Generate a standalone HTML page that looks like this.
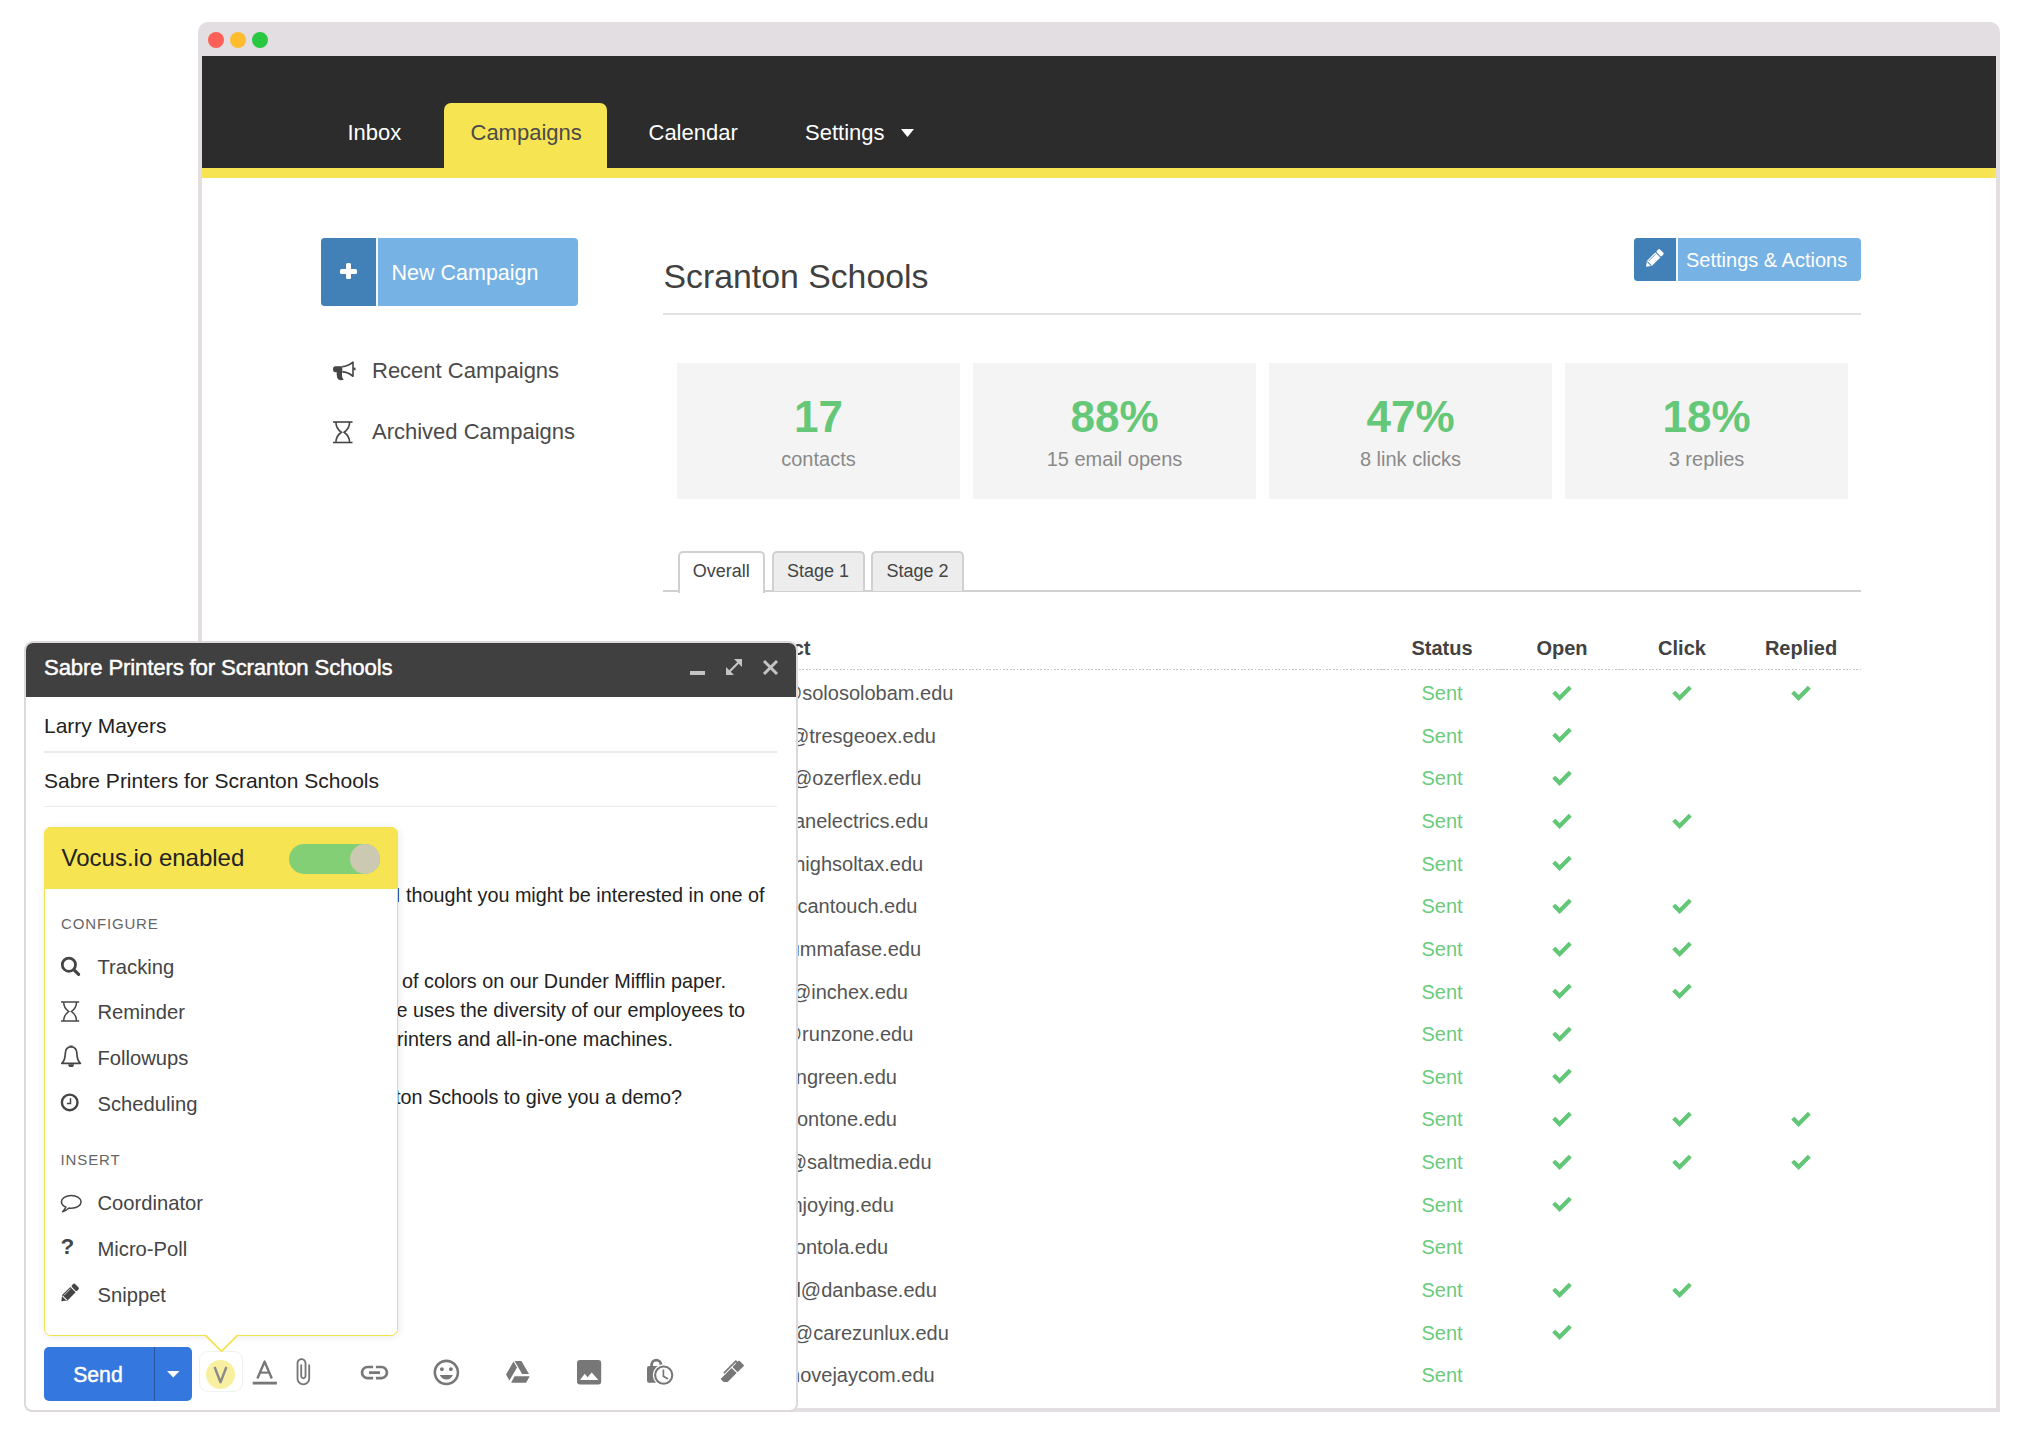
<!DOCTYPE html>
<html><head><meta charset="utf-8"><title>Vocus.io Campaigns</title>
<style>
html,body{margin:0;padding:0;}
body{width:2028px;height:1430px;position:relative;overflow:hidden;background:#fff;font-family:"Liberation Sans", sans-serif;}
.t{position:absolute;white-space:nowrap;}
svg{position:absolute;}
</style></head><body>

<div style="position:absolute;left:198px;top:22px;width:1802px;height:1390px;background:#e2dee2;border-radius:10px 10px 0 0;"></div>
<div style="position:absolute;left:202px;top:56px;width:1794px;height:1352px;background:#fff;"></div>
<div style="position:absolute;left:208px;top:32px;width:16px;height:16px;background:#fe5f57;border-radius:50%;"></div>
<div style="position:absolute;left:230px;top:32px;width:16px;height:16px;background:#febc2e;border-radius:50%;"></div>
<div style="position:absolute;left:252px;top:32px;width:16px;height:16px;background:#29c840;border-radius:50%;"></div>
<div style="position:absolute;left:202px;top:56px;width:1794px;height:112px;background:#2c2c2c;"></div>
<div style="position:absolute;left:202px;top:168px;width:1794px;height:10px;background:#f6e452;"></div>
<div style="position:absolute;left:444px;top:103px;width:163px;height:67px;background:#f6e452;border-radius:7px 7px 0 0;"></div>
<div class="t" style="left:347.50px;top:122.37px;font-size:22px;line-height:22px;color:#ffffff;font-weight:400;">Inbox</div>
<div class="t" style="left:470.50px;top:122.37px;font-size:22px;line-height:22px;color:#4a4a4a;font-weight:400;">Campaigns</div>
<div class="t" style="left:648.50px;top:122.37px;font-size:22px;line-height:22px;color:#ffffff;font-weight:400;">Calendar</div>
<div class="t" style="left:805.00px;top:122.37px;font-size:22px;line-height:22px;color:#ffffff;font-weight:400;">Settings</div>
<svg style="position:absolute;left:901px;top:129px;overflow:visible;" width="13" height="8" viewBox="0 0 13 8"><path d="M0,0 H13 L6.5,8 Z" fill="#fff"/></svg>
<div style="position:absolute;left:321px;top:238px;width:257px;height:68px;background:#77b2e4;border-radius:4px;"></div>
<div style="position:absolute;left:321px;top:238px;width:55px;height:68px;background:#4281b8;border-radius:4px 0 0 4px;"></div>
<div style="position:absolute;left:376px;top:238px;width:2px;height:68px;background:#f2f6fa;"></div>
<div style="position:absolute;left:340px;top:269px;width:17px;height:4.5px;background:#fff;border-radius:1.5px;"></div>
<div style="position:absolute;left:346px;top:263px;width:5px;height:16px;background:#fff;border-radius:1.5px;"></div>
<div class="t" style="left:391.50px;top:263.30px;font-size:21.5px;line-height:21.5px;color:#ffffff;font-weight:400;">New Campaign</div>
<svg style="position:absolute;left:333px;top:360.7px;overflow:visible;" width="24" height="20" viewBox="0 0 24 20"><g fill="#454545" stroke="#454545"><path d="M2.5,5.3 H9.3 V11.2 H2.5 A2.5,2.95 0 0 1 2.5,5.3 Z" stroke="none"/><path d="M3.7,11 H9 V14.5 Q9,17.2 10.8,18.4 Q8,19.8 5.6,18.6 Q3.7,17.2 3.7,13.5 Z" stroke="none"/><path d="M9.3,5.6 Q15,5.4 20,1.2 V15.3 Q15,11 9.3,10.9" fill="none" stroke-width="1.6" stroke-linejoin="round"/><rect x="20.5" y="6.6" width="2" height="2.6" stroke="none"/></g></svg>
<div class="t" style="left:372.00px;top:359.87px;font-size:22px;line-height:22px;color:#4a4a4a;font-weight:400;">Recent Campaigns</div>
<svg style="position:absolute;left:333px;top:420.5px;overflow:visible;" width="19.5" height="22.5" viewBox="0 0 19.5 22.5"><g fill="none" stroke="#454545" stroke-width="1.6"><line x1="0" y1="1" x2="19.5" y2="1"/><line x1="0" y1="21.5" x2="19.5" y2="21.5"/><path d="M2.925,1 C2.7300000000000004,7.2 5.85,9.45 8.385,11.25 C5.85,13.049999999999999 2.7300000000000004,15.3 2.925,21.5"/><path d="M16.575,1 C16.77,7.2 13.649999999999999,9.45 11.114999999999998,11.25 C13.649999999999999,13.049999999999999 16.77,15.3 16.575,21.5"/></g></svg>
<div class="t" style="left:372.00px;top:421.37px;font-size:22px;line-height:22px;color:#4a4a4a;font-weight:400;">Archived Campaigns</div>
<div class="t" style="left:663.50px;top:259.68px;font-size:33.8px;line-height:33.8px;color:#404040;font-weight:400;">Scranton Schools</div>
<div style="position:absolute;left:663px;top:313px;width:1198px;height:2px;background:#e2e2e2;"></div>
<div style="position:absolute;left:1634px;top:238px;width:227px;height:43px;background:#77b2e4;border-radius:4px;"></div>
<div style="position:absolute;left:1634px;top:238px;width:42px;height:43px;background:#4281b8;border-radius:4px 0 0 4px;"></div>
<div style="position:absolute;left:1676px;top:238px;width:2px;height:43px;background:#f2f6fa;"></div>
<svg style="position:absolute;left:0px;top:0px;overflow:visible;" width="1" height="1" viewBox="0 0 1 1"><g transform="translate(1646,266.8) rotate(-45)"><path d="M0,0 L5,-3.6 H16.7 V3.6 H5 Z" fill="#ffffff"/><rect x="17.7" y="-3.6" width="4.5" height="7.2" rx="1.6" fill="#ffffff"/><line x1="6" y1="-2.2" x2="15.7" y2="-2.2" stroke="#4281b8" stroke-width="0.7"/><line x1="4.6" y1="-2.8800000000000003" x2="4.6" y2="2.8800000000000003" stroke="#4281b8" stroke-width="1"/></g></svg>
<div class="t" style="left:1686.00px;top:249.97px;font-size:20px;line-height:20px;color:#ffffff;font-weight:400;">Settings &amp; Actions</div>
<div style="position:absolute;left:677px;top:363px;width:283px;height:136px;background:#f4f4f4;"></div>
<div class="t" style="left:677.00px;width:283px;text-align:center;top:395.25px;font-size:44px;line-height:44px;color:#65c878;font-weight:700;">17</div>
<div class="t" style="left:677.00px;width:283px;text-align:center;top:449.07px;font-size:20px;line-height:20px;color:#8a8a8a;font-weight:400;">contacts</div>
<div style="position:absolute;left:973px;top:363px;width:283px;height:136px;background:#f4f4f4;"></div>
<div class="t" style="left:973.00px;width:283px;text-align:center;top:395.25px;font-size:44px;line-height:44px;color:#65c878;font-weight:700;">88%</div>
<div class="t" style="left:973.00px;width:283px;text-align:center;top:449.07px;font-size:20px;line-height:20px;color:#8a8a8a;font-weight:400;">15 email opens</div>
<div style="position:absolute;left:1269px;top:363px;width:283px;height:136px;background:#f4f4f4;"></div>
<div class="t" style="left:1269.00px;width:283px;text-align:center;top:395.25px;font-size:44px;line-height:44px;color:#65c878;font-weight:700;">47%</div>
<div class="t" style="left:1269.00px;width:283px;text-align:center;top:449.07px;font-size:20px;line-height:20px;color:#8a8a8a;font-weight:400;">8 link clicks</div>
<div style="position:absolute;left:1565px;top:363px;width:283px;height:136px;background:#f4f4f4;"></div>
<div class="t" style="left:1565.00px;width:283px;text-align:center;top:395.25px;font-size:44px;line-height:44px;color:#65c878;font-weight:700;">18%</div>
<div class="t" style="left:1565.00px;width:283px;text-align:center;top:449.07px;font-size:20px;line-height:20px;color:#8a8a8a;font-weight:400;">3 replies</div>
<div style="position:absolute;left:663px;top:590px;width:1198px;height:2px;background:#d0d0d0;"></div>
<div style="position:absolute;left:677.5px;top:551px;width:83.5px;height:40px;background:#ffffff;border:2px solid #d0d0d0;border-bottom:none;border-radius:5px 5px 0 0;"></div>
<div class="t" style="left:677.50px;width:87.5px;text-align:center;top:561.76px;font-size:18px;line-height:18px;color:#444444;font-weight:400;">Overall</div>
<div style="position:absolute;left:771.5px;top:551px;width:89.0px;height:38px;background:#ededed;border:2px solid #d0d0d0;border-bottom:none;border-radius:5px 5px 0 0;"></div>
<div class="t" style="left:771.50px;width:93.0px;text-align:center;top:561.76px;font-size:18px;line-height:18px;color:#444444;font-weight:400;">Stage 1</div>
<div style="position:absolute;left:871px;top:551px;width:89px;height:38px;background:#ededed;border:2px solid #d0d0d0;border-bottom:none;border-radius:5px 5px 0 0;"></div>
<div class="t" style="left:871.00px;width:93px;text-align:center;top:561.76px;font-size:18px;line-height:18px;color:#444444;font-weight:400;">Stage 2</div>
<div class="t" style="left:690.00px;top:637.67px;font-size:20px;line-height:20px;color:#424242;font-weight:700;">#</div>
<div class="t" style="left:736.00px;top:637.67px;font-size:20px;line-height:20px;color:#424242;font-weight:700;">Contact</div>
<div class="t" style="left:1382.00px;width:120px;text-align:center;top:637.67px;font-size:20px;line-height:20px;color:#424242;font-weight:700;">Status</div>
<div class="t" style="left:1502.00px;width:120px;text-align:center;top:637.67px;font-size:20px;line-height:20px;color:#424242;font-weight:700;">Open</div>
<div class="t" style="left:1622.00px;width:120px;text-align:center;top:637.67px;font-size:20px;line-height:20px;color:#424242;font-weight:700;">Click</div>
<div class="t" style="left:1741.00px;width:120px;text-align:center;top:637.67px;font-size:20px;line-height:20px;color:#424242;font-weight:700;">Replied</div>
<div style="position:absolute;left:663px;top:668.8px;width:1198px;height:1.7px;background:repeating-linear-gradient(90deg,#c2c2c2 0,#c2c2c2 1.7px,transparent 1.7px,transparent 3.4px);"></div>
<div style="position:absolute;left:1380.5px;top:668.8px;width:5.0px;height:1.7000000000000455px;background:#c8c8c8;"></div>
<div style="position:absolute;left:1499.5px;top:668.8px;width:5.0px;height:1.7000000000000455px;background:#c8c8c8;"></div>
<div style="position:absolute;left:1619.0px;top:668.8px;width:5.0px;height:1.7000000000000455px;background:#c8c8c8;"></div>
<div style="position:absolute;left:1739.5px;top:668.8px;width:5.0px;height:1.7000000000000455px;background:#c8c8c8;"></div>
<div class="t" style="right:1074.60px;text-align:right;top:682.97px;font-size:20px;line-height:20px;color:#555555;font-weight:400;">larry@solosolobam.edu</div>
<div class="t" style="left:1382.00px;width:120px;text-align:center;top:682.97px;font-size:20px;line-height:20px;color:#6bcb7c;font-weight:400;">Sent</div>
<svg style="position:absolute;left:1552px;top:684.6px;overflow:visible;" width="20" height="16" viewBox="0 0 20 16"><path d="M3.2,8.6 L7.6,13 L16.8,3.8" fill="none" stroke="#62c677" stroke-width="4.2" stroke-linecap="square" stroke-linejoin="miter"/></svg>
<svg style="position:absolute;left:1672px;top:684.6px;overflow:visible;" width="20" height="16" viewBox="0 0 20 16"><path d="M3.2,8.6 L7.6,13 L16.8,3.8" fill="none" stroke="#62c677" stroke-width="4.2" stroke-linecap="square" stroke-linejoin="miter"/></svg>
<svg style="position:absolute;left:1791px;top:684.6px;overflow:visible;" width="20" height="16" viewBox="0 0 20 16"><path d="M3.2,8.6 L7.6,13 L16.8,3.8" fill="none" stroke="#62c677" stroke-width="4.2" stroke-linecap="square" stroke-linejoin="miter"/></svg>
<div class="t" style="right:1092.00px;text-align:right;top:725.62px;font-size:20px;line-height:20px;color:#555555;font-weight:400;">erin@tresgeoex.edu</div>
<div class="t" style="left:1382.00px;width:120px;text-align:center;top:725.62px;font-size:20px;line-height:20px;color:#6bcb7c;font-weight:400;">Sent</div>
<svg style="position:absolute;left:1552px;top:727.25px;overflow:visible;" width="20" height="16" viewBox="0 0 20 16"><path d="M3.2,8.6 L7.6,13 L16.8,3.8" fill="none" stroke="#62c677" stroke-width="4.2" stroke-linecap="square" stroke-linejoin="miter"/></svg>
<div class="t" style="right:1106.70px;text-align:right;top:768.27px;font-size:20px;line-height:20px;color:#555555;font-weight:400;">tor@ozerflex.edu</div>
<div class="t" style="left:1382.00px;width:120px;text-align:center;top:768.27px;font-size:20px;line-height:20px;color:#6bcb7c;font-weight:400;">Sent</div>
<svg style="position:absolute;left:1552px;top:769.9px;overflow:visible;" width="20" height="16" viewBox="0 0 20 16"><path d="M3.2,8.6 L7.6,13 L16.8,3.8" fill="none" stroke="#62c677" stroke-width="4.2" stroke-linecap="square" stroke-linejoin="miter"/></svg>
<div class="t" style="right:1099.50px;text-align:right;top:810.92px;font-size:20px;line-height:20px;color:#555555;font-weight:400;">kelly@anelectrics.edu</div>
<div class="t" style="left:1382.00px;width:120px;text-align:center;top:810.92px;font-size:20px;line-height:20px;color:#6bcb7c;font-weight:400;">Sent</div>
<svg style="position:absolute;left:1552px;top:812.55px;overflow:visible;" width="20" height="16" viewBox="0 0 20 16"><path d="M3.2,8.6 L7.6,13 L16.8,3.8" fill="none" stroke="#62c677" stroke-width="4.2" stroke-linecap="square" stroke-linejoin="miter"/></svg>
<svg style="position:absolute;left:1672px;top:812.55px;overflow:visible;" width="20" height="16" viewBox="0 0 20 16"><path d="M3.2,8.6 L7.6,13 L16.8,3.8" fill="none" stroke="#62c677" stroke-width="4.2" stroke-linecap="square" stroke-linejoin="miter"/></svg>
<div class="t" style="right:1104.80px;text-align:right;top:853.57px;font-size:20px;line-height:20px;color:#555555;font-weight:400;">ryan@highsoltax.edu</div>
<div class="t" style="left:1382.00px;width:120px;text-align:center;top:853.57px;font-size:20px;line-height:20px;color:#6bcb7c;font-weight:400;">Sent</div>
<svg style="position:absolute;left:1552px;top:855.2px;overflow:visible;" width="20" height="16" viewBox="0 0 20 16"><path d="M3.2,8.6 L7.6,13 L16.8,3.8" fill="none" stroke="#62c677" stroke-width="4.2" stroke-linecap="square" stroke-linejoin="miter"/></svg>
<div class="t" style="right:1110.50px;text-align:right;top:896.22px;font-size:20px;line-height:20px;color:#555555;font-weight:400;">andy@cantouch.edu</div>
<div class="t" style="left:1382.00px;width:120px;text-align:center;top:896.22px;font-size:20px;line-height:20px;color:#6bcb7c;font-weight:400;">Sent</div>
<svg style="position:absolute;left:1552px;top:897.85px;overflow:visible;" width="20" height="16" viewBox="0 0 20 16"><path d="M3.2,8.6 L7.6,13 L16.8,3.8" fill="none" stroke="#62c677" stroke-width="4.2" stroke-linecap="square" stroke-linejoin="miter"/></svg>
<svg style="position:absolute;left:1672px;top:897.85px;overflow:visible;" width="20" height="16" viewBox="0 0 20 16"><path d="M3.2,8.6 L7.6,13 L16.8,3.8" fill="none" stroke="#62c677" stroke-width="4.2" stroke-linecap="square" stroke-linejoin="miter"/></svg>
<div class="t" style="right:1107.00px;text-align:right;top:938.87px;font-size:20px;line-height:20px;color:#555555;font-weight:400;">creed@dummafase.edu</div>
<div class="t" style="left:1382.00px;width:120px;text-align:center;top:938.87px;font-size:20px;line-height:20px;color:#6bcb7c;font-weight:400;">Sent</div>
<svg style="position:absolute;left:1552px;top:940.5px;overflow:visible;" width="20" height="16" viewBox="0 0 20 16"><path d="M3.2,8.6 L7.6,13 L16.8,3.8" fill="none" stroke="#62c677" stroke-width="4.2" stroke-linecap="square" stroke-linejoin="miter"/></svg>
<svg style="position:absolute;left:1672px;top:940.5px;overflow:visible;" width="20" height="16" viewBox="0 0 20 16"><path d="M3.2,8.6 L7.6,13 L16.8,3.8" fill="none" stroke="#62c677" stroke-width="4.2" stroke-linecap="square" stroke-linejoin="miter"/></svg>
<div class="t" style="right:1120.00px;text-align:right;top:981.52px;font-size:20px;line-height:20px;color:#555555;font-weight:400;">pam@inchex.edu</div>
<div class="t" style="left:1382.00px;width:120px;text-align:center;top:981.52px;font-size:20px;line-height:20px;color:#6bcb7c;font-weight:400;">Sent</div>
<svg style="position:absolute;left:1552px;top:983.1500000000001px;overflow:visible;" width="20" height="16" viewBox="0 0 20 16"><path d="M3.2,8.6 L7.6,13 L16.8,3.8" fill="none" stroke="#62c677" stroke-width="4.2" stroke-linecap="square" stroke-linejoin="miter"/></svg>
<svg style="position:absolute;left:1672px;top:983.1500000000001px;overflow:visible;" width="20" height="16" viewBox="0 0 20 16"><path d="M3.2,8.6 L7.6,13 L16.8,3.8" fill="none" stroke="#62c677" stroke-width="4.2" stroke-linecap="square" stroke-linejoin="miter"/></svg>
<div class="t" style="right:1114.70px;text-align:right;top:1024.17px;font-size:20px;line-height:20px;color:#555555;font-weight:400;">jan@runzone.edu</div>
<div class="t" style="left:1382.00px;width:120px;text-align:center;top:1024.17px;font-size:20px;line-height:20px;color:#6bcb7c;font-weight:400;">Sent</div>
<svg style="position:absolute;left:1552px;top:1025.8px;overflow:visible;" width="20" height="16" viewBox="0 0 20 16"><path d="M3.2,8.6 L7.6,13 L16.8,3.8" fill="none" stroke="#62c677" stroke-width="4.2" stroke-linecap="square" stroke-linejoin="miter"/></svg>
<div class="t" style="right:1131.00px;text-align:right;top:1066.82px;font-size:20px;line-height:20px;color:#555555;font-weight:400;">holly@singreen.edu</div>
<div class="t" style="left:1382.00px;width:120px;text-align:center;top:1066.82px;font-size:20px;line-height:20px;color:#6bcb7c;font-weight:400;">Sent</div>
<svg style="position:absolute;left:1552px;top:1068.45px;overflow:visible;" width="20" height="16" viewBox="0 0 20 16"><path d="M3.2,8.6 L7.6,13 L16.8,3.8" fill="none" stroke="#62c677" stroke-width="4.2" stroke-linecap="square" stroke-linejoin="miter"/></svg>
<div class="t" style="right:1131.00px;text-align:right;top:1109.47px;font-size:20px;line-height:20px;color:#555555;font-weight:400;">oscar@kontone.edu</div>
<div class="t" style="left:1382.00px;width:120px;text-align:center;top:1109.47px;font-size:20px;line-height:20px;color:#6bcb7c;font-weight:400;">Sent</div>
<svg style="position:absolute;left:1552px;top:1111.1000000000001px;overflow:visible;" width="20" height="16" viewBox="0 0 20 16"><path d="M3.2,8.6 L7.6,13 L16.8,3.8" fill="none" stroke="#62c677" stroke-width="4.2" stroke-linecap="square" stroke-linejoin="miter"/></svg>
<svg style="position:absolute;left:1672px;top:1111.1000000000001px;overflow:visible;" width="20" height="16" viewBox="0 0 20 16"><path d="M3.2,8.6 L7.6,13 L16.8,3.8" fill="none" stroke="#62c677" stroke-width="4.2" stroke-linecap="square" stroke-linejoin="miter"/></svg>
<svg style="position:absolute;left:1791px;top:1111.1000000000001px;overflow:visible;" width="20" height="16" viewBox="0 0 20 16"><path d="M3.2,8.6 L7.6,13 L16.8,3.8" fill="none" stroke="#62c677" stroke-width="4.2" stroke-linecap="square" stroke-linejoin="miter"/></svg>
<div class="t" style="right:1096.40px;text-align:right;top:1152.12px;font-size:20px;line-height:20px;color:#555555;font-weight:400;">phyllis@saltmedia.edu</div>
<div class="t" style="left:1382.00px;width:120px;text-align:center;top:1152.12px;font-size:20px;line-height:20px;color:#6bcb7c;font-weight:400;">Sent</div>
<svg style="position:absolute;left:1552px;top:1153.75px;overflow:visible;" width="20" height="16" viewBox="0 0 20 16"><path d="M3.2,8.6 L7.6,13 L16.8,3.8" fill="none" stroke="#62c677" stroke-width="4.2" stroke-linecap="square" stroke-linejoin="miter"/></svg>
<svg style="position:absolute;left:1672px;top:1153.75px;overflow:visible;" width="20" height="16" viewBox="0 0 20 16"><path d="M3.2,8.6 L7.6,13 L16.8,3.8" fill="none" stroke="#62c677" stroke-width="4.2" stroke-linecap="square" stroke-linejoin="miter"/></svg>
<svg style="position:absolute;left:1791px;top:1153.75px;overflow:visible;" width="20" height="16" viewBox="0 0 20 16"><path d="M3.2,8.6 L7.6,13 L16.8,3.8" fill="none" stroke="#62c677" stroke-width="4.2" stroke-linecap="square" stroke-linejoin="miter"/></svg>
<div class="t" style="right:1134.20px;text-align:right;top:1194.77px;font-size:20px;line-height:20px;color:#555555;font-weight:400;">toby@enjoying.edu</div>
<div class="t" style="left:1382.00px;width:120px;text-align:center;top:1194.77px;font-size:20px;line-height:20px;color:#6bcb7c;font-weight:400;">Sent</div>
<svg style="position:absolute;left:1552px;top:1196.3999999999999px;overflow:visible;" width="20" height="16" viewBox="0 0 20 16"><path d="M3.2,8.6 L7.6,13 L16.8,3.8" fill="none" stroke="#62c677" stroke-width="4.2" stroke-linecap="square" stroke-linejoin="miter"/></svg>
<div class="t" style="right:1139.80px;text-align:right;top:1237.42px;font-size:20px;line-height:20px;color:#555555;font-weight:400;">stanley@dontola.edu</div>
<div class="t" style="left:1382.00px;width:120px;text-align:center;top:1237.42px;font-size:20px;line-height:20px;color:#6bcb7c;font-weight:400;">Sent</div>
<div class="t" style="right:1091.20px;text-align:right;top:1280.07px;font-size:20px;line-height:20px;color:#555555;font-weight:400;">todd@danbase.edu</div>
<div class="t" style="left:1382.00px;width:120px;text-align:center;top:1280.07px;font-size:20px;line-height:20px;color:#6bcb7c;font-weight:400;">Sent</div>
<svg style="position:absolute;left:1552px;top:1281.7px;overflow:visible;" width="20" height="16" viewBox="0 0 20 16"><path d="M3.2,8.6 L7.6,13 L16.8,3.8" fill="none" stroke="#62c677" stroke-width="4.2" stroke-linecap="square" stroke-linejoin="miter"/></svg>
<svg style="position:absolute;left:1672px;top:1281.7px;overflow:visible;" width="20" height="16" viewBox="0 0 20 16"><path d="M3.2,8.6 L7.6,13 L16.8,3.8" fill="none" stroke="#62c677" stroke-width="4.2" stroke-linecap="square" stroke-linejoin="miter"/></svg>
<div class="t" style="right:1079.20px;text-align:right;top:1322.72px;font-size:20px;line-height:20px;color:#555555;font-weight:400;">darryl@carezunlux.edu</div>
<div class="t" style="left:1382.00px;width:120px;text-align:center;top:1322.72px;font-size:20px;line-height:20px;color:#6bcb7c;font-weight:400;">Sent</div>
<svg style="position:absolute;left:1552px;top:1324.3500000000001px;overflow:visible;" width="20" height="16" viewBox="0 0 20 16"><path d="M3.2,8.6 L7.6,13 L16.8,3.8" fill="none" stroke="#62c677" stroke-width="4.2" stroke-linecap="square" stroke-linejoin="miter"/></svg>
<div class="t" style="right:1093.30px;text-align:right;top:1365.37px;font-size:20px;line-height:20px;color:#555555;font-weight:400;">kevin@movejaycom.edu</div>
<div class="t" style="left:1382.00px;width:120px;text-align:center;top:1365.37px;font-size:20px;line-height:20px;color:#6bcb7c;font-weight:400;">Sent</div>
<div style="position:absolute;left:24px;top:641px;width:770px;height:767px;background:#fff;border:2px solid #dcd8dc;border-radius:9px 9px 8px 8px;overflow:hidden;"><div style="position:absolute;left:0;top:0;width:770px;height:54px;background:#404040;"></div></div>
<div class="t" style="left:44.00px;top:656.50px;font-size:22.2px;line-height:22.2px;color:#ffffff;font-weight:400;letter-spacing:-0.16px;-webkit-text-stroke:0.45px #fff;">Sabre Printers for Scranton Schools</div>
<div style="position:absolute;left:690px;top:671px;width:15px;height:4px;background:#c4c4c4;"></div>
<svg style="position:absolute;left:724px;top:657px;overflow:visible;" width="20" height="20" viewBox="0 0 20 20"><g fill="#c4c4c4"><path d="M2,18 V10 L10,18 Z"/><path d="M18,2 H10 L18,10 Z"/><line x1="5" y1="15" x2="15" y2="5" stroke="#c4c4c4" stroke-width="2.2"/></g></svg>
<svg style="position:absolute;left:762px;top:659px;overflow:visible;" width="17" height="17" viewBox="0 0 17 17"><g stroke="#c4c4c4" stroke-width="3" stroke-linecap="butt"><line x1="2" y1="2" x2="15" y2="15"/><line x1="15" y1="2" x2="2" y2="15"/></g></svg>
<div class="t" style="left:44.00px;top:715.22px;font-size:21px;line-height:21px;color:#222222;font-weight:400;">Larry Mayers</div>
<div style="position:absolute;left:44px;top:751px;width:733px;height:1.5px;background:#ebebeb;"></div>
<div class="t" style="left:44.00px;top:770.22px;font-size:21px;line-height:21px;color:#222222;font-weight:400;">Sabre Printers for Scranton Schools</div>
<div style="position:absolute;left:44px;top:805.5px;width:733px;height:1.5px;background:#ebebeb;"></div>
<div class="t" style="left:395.00px;top:885.54px;font-size:19.8px;line-height:19.8px;color:#222222;font-weight:400;">I thought you might be interested in one of</div>
<div class="t" style="left:402.00px;top:972.04px;font-size:19.8px;line-height:19.8px;color:#222222;font-weight:400;">of colors on our Dunder Mifflin paper.</div>
<div class="t" style="left:396.50px;top:1001.04px;font-size:19.8px;line-height:19.8px;color:#222222;font-weight:400;">e uses the diversity of our employees to</div>
<div class="t" style="left:397.00px;top:1030.44px;font-size:19.8px;line-height:19.8px;color:#222222;font-weight:400;">rinters and all-in-one machines.</div>
<div class="t" style="left:395.00px;top:1088.24px;font-size:19.8px;line-height:19.8px;color:#222222;font-weight:400;">ton Schools to give you a demo?</div>
<div style="position:absolute;left:44px;top:1347px;width:148px;height:54px;background:#3477de;border-radius:5px;"></div>
<div style="position:absolute;left:154px;top:1347px;width:1.3000000000000114px;height:54px;background:#27559e;"></div>
<div class="t" style="left:73.20px;top:1364.05px;font-size:21.2px;line-height:21.2px;color:#ffffff;font-weight:400;-webkit-text-stroke:0.45px #fff;">Send</div>
<svg style="position:absolute;left:167px;top:1371px;overflow:visible;" width="13" height="7" viewBox="0 0 13 7"><path d="M0,0 H12.5 L6.25,6.5 Z" fill="#fff"/></svg>
<div style="position:absolute;left:199px;top:1351px;width:42px;height:39px;border:1px solid #f1f1f1;border-radius:9px;"></div>
<div style="position:absolute;left:206px;top:1359.5px;width:29px;height:29.0px;background:#f8f0a0;border-radius:50%;"></div>
<svg style="position:absolute;left:212.8px;top:1366px;overflow:visible;" width="16" height="18" viewBox="0 0 16 18"><path d="M1.6,1 L7.5,16.2 L13.4,1" fill="none" stroke="#8a8a8a" stroke-width="2.4" stroke-linejoin="round"/></svg>
<svg style="position:absolute;left:250px;top:1355px;overflow:visible;" width="30" height="32" viewBox="0 0 30 32"><path d="M7.4,23.5 L14.6,6.6 L21.8,23.5" fill="none" stroke="#777777" stroke-width="2.4" stroke-linejoin="round"/><line x1="10" y1="17.6" x2="19.2" y2="17.6" stroke="#777777" stroke-width="2.1"/><rect x="2.7" y="26.7" width="24.2" height="2.8" fill="#777777"/></svg>
<svg style="position:absolute;left:288.2px;top:1357.4px;overflow:visible;" width="29.5" height="29.5" viewBox="0 0 29.5 29.5"><g transform="scale(1.2291666666666667)"><path d="M16.5 6v11.5c0 2.21-1.79 4-4 4s-4-1.79-4-4V5c0-1.38 1.12-2.5 2.5-2.5s2.5 1.12 2.5 2.5v10.5c0 .55-.45 1-1 1s-1-.45-1-1V6H10v9.5c0 1.38 1.12 2.5 2.5 2.5s2.5-1.12 2.5-2.5V5c0-2.21-1.79-4-4-4S7 2.79 7 5v12.5c0 3.04 2.46 5.5 5.5 5.5s5.5-2.46 5.5-5.5V6h-1.5z" fill="#777777"/></g></svg>
<svg style="position:absolute;left:358px;top:1355.5px;overflow:visible;" width="33" height="33" viewBox="0 0 33 33"><g transform="scale(1.375)"><path d="M3.9 12c0-1.71 1.39-3.1 3.1-3.1h4V7H7c-2.76 0-5 2.24-5 5s2.24 5 5 5h4v-1.9H7c-1.71 0-3.1-1.39-3.1-3.1zM8 13h8v-2H8v2zm9-6h-4v1.9h4c1.71 0 3.1 1.39 3.1 3.1s-1.39 3.1-3.1 3.1h-4V17h4c2.76 0 5-2.24 5-5s-2.24-5-5-5z" fill="#777777"/></g></svg>
<svg style="position:absolute;left:430.7px;top:1356.7px;overflow:visible;" width="30.8" height="30.8" viewBox="0 0 30.8 30.8"><g transform="scale(1.2833333333333334)"><path d="M11.99 2C6.47 2 2 6.48 2 12s4.47 10 9.99 10C17.52 22 22 17.52 22 12S17.52 2 11.99 2zM12 20c-4.42 0-8-3.58-8-8s3.58-8 8-8 8 3.58 8 8-3.58 8-8 8zm3.5-9c.83 0 1.5-.67 1.5-1.5S16.33 8 15.5 8 14 8.67 14 9.5s.67 1.5 1.5 1.5zm-7 0c.83 0 1.5-.67 1.5-1.5S9.33 8 8.5 8 7 8.67 7 9.5 7.67 11 8.5 11zm3.5 6.5c2.33 0 4.31-1.46 5.11-3.5H6.89c.8 2.04 2.78 3.5 5.11 3.5z" fill="#777777"/></g></svg>
<svg style="position:absolute;left:505px;top:1361px;overflow:visible;" width="25" height="23" viewBox="0 0 25 23"><g fill="#777777"><path d="M8.5,0.6 L1,13.6 L4.4,19.6 L12,6.6 Z"/><path d="M9.6,0 H16.4 L24,13.1 H17.1 Z"/><path d="M6.1,21.8 L9.6,15.3 H24.7 L21.1,21.8 Z"/></g></svg>
<svg style="position:absolute;left:577px;top:1360px;overflow:visible;" width="25" height="25" viewBox="0 0 25 25"><rect x="0" y="0" width="24.2" height="24.6" rx="3" fill="#777777"/><path d="M3,19.9 L7.7,13.8 L10.6,17.2 L14.7,12.4 L21.4,19.9 Z" fill="#fff"/></svg>
<svg style="position:absolute;left:646px;top:1358px;overflow:visible;" width="30" height="30" viewBox="0 0 30 30"><g fill="#777777"><path d="M5.65,10 V6.7 A4.65,4.65 0 0 1 14.95,6.7 V10" fill="none" stroke="#777777" stroke-width="2.8"/><rect x="1" y="8" width="19" height="16.8" rx="2"/></g><circle cx="17.7" cy="17.1" r="10.8" fill="#fff"/><circle cx="17.7" cy="17.1" r="8.6" fill="none" stroke="#777777" stroke-width="2.1"/><path d="M17.4,11.5 V18.2 L22,21" fill="none" stroke="#777777" stroke-width="1.7"/></svg>
<svg style="position:absolute;left:0px;top:0px;overflow:visible;" width="1" height="1" viewBox="0 0 1 1"><g transform="translate(732.3,1372.3) rotate(-45)" fill="#777777"><path d="M-13,-3.6 H2.6 V3.6 H-10.2 L-13,0.8 Z"/><rect x="3.9" y="-3.6" width="9.3" height="7.2" rx="0.6"/><rect x="-6.5" y="-6.2" width="17.7" height="1.6"/><rect x="9.2" y="-5" width="2" height="1.6"/></g></svg>
<div style="position:absolute;left:44px;top:827px;width:353.5px;height:509px;box-sizing:border-box;background:#fff;border:1.6px solid #f4e24c;border-radius:7px;box-shadow:1px 1px 9px rgba(0,0,0,0.09);"></div>
<div style="position:absolute;left:44px;top:827px;width:353.5px;height:62px;background:#f6e452;border-radius:7px 7px 0 0;"></div>
<div class="t" style="left:61.50px;top:846.48px;font-size:24px;line-height:24px;color:#222222;font-weight:400;">Vocus.io enabled</div>
<div style="position:absolute;left:289px;top:844px;width:91px;height:30px;background:#82cf76;border-radius:15px;"></div>
<div style="position:absolute;left:350px;top:844px;width:30px;height:30px;background:#cbc9b1;border-radius:50%;"></div>
<div class="t" style="left:61.00px;top:915.90px;font-size:15px;line-height:15px;color:#666666;font-weight:400;letter-spacing:0.85px;">CONFIGURE</div>
<div class="t" style="left:97.50px;top:956.70px;font-size:20.2px;line-height:20.2px;color:#444444;font-weight:400;">Tracking</div>
<div class="t" style="left:97.50px;top:1002.40px;font-size:20.2px;line-height:20.2px;color:#444444;font-weight:400;">Reminder</div>
<div class="t" style="left:97.50px;top:1047.90px;font-size:20.2px;line-height:20.2px;color:#444444;font-weight:400;">Followups</div>
<div class="t" style="left:97.50px;top:1093.70px;font-size:20.2px;line-height:20.2px;color:#444444;font-weight:400;">Scheduling</div>
<div class="t" style="left:60.60px;top:1152.10px;font-size:15px;line-height:15px;color:#666666;font-weight:400;letter-spacing:0.85px;">INSERT</div>
<div class="t" style="left:97.50px;top:1192.90px;font-size:20.2px;line-height:20.2px;color:#444444;font-weight:400;">Coordinator</div>
<div class="t" style="left:97.50px;top:1238.90px;font-size:20.2px;line-height:20.2px;color:#444444;font-weight:400;">Micro-Poll</div>
<div class="t" style="left:97.50px;top:1284.90px;font-size:20.2px;line-height:20.2px;color:#444444;font-weight:400;">Snippet</div>
<svg style="position:absolute;left:60px;top:955px;overflow:visible;" width="22" height="22" viewBox="0 0 22 22"><circle cx="8.9" cy="9.7" r="6.6" fill="none" stroke="#454545" stroke-width="2.8"/><line x1="14" y1="14.8" x2="18.6" y2="19.3" stroke="#454545" stroke-width="3.2" stroke-linecap="round"/></svg>
<svg style="position:absolute;left:60.8px;top:1000.8px;overflow:visible;" width="18.2" height="21" viewBox="0 0 18.2 21"><g fill="none" stroke="#454545" stroke-width="1.5"><line x1="0" y1="1" x2="18.2" y2="1"/><line x1="0" y1="20" x2="18.2" y2="20"/><path d="M2.73,1 C2.548,6.72 5.46,8.82 7.826,10.5 C5.46,12.18 2.548,14.280000000000001 2.73,20"/><path d="M15.469999999999999,1 C15.652,6.72 12.739999999999998,8.82 10.373999999999999,10.5 C12.739999999999998,12.18 15.652,14.280000000000001 15.469999999999999,20"/></g></svg>
<svg style="position:absolute;left:60px;top:1045px;overflow:visible;" width="22" height="24" viewBox="0 0 22 24"><path d="M11,1.8 C6.6,1.8 5.4,5 5.3,8.5 C5.2,13.6 4.3,16 1.8,18.3 H20.4 C17.9,16 17,13.6 16.9,8.5 C16.8,5 15.6,1.8 11,1.8 Z" fill="none" stroke="#454545" stroke-width="1.7" stroke-linejoin="round"/><path d="M9,0.4 L11.1,2.2 L13.2,0.4" fill="#454545"/><path d="M8.2,19.2 A2.9,2.9 0 0 0 14,19.2 Z" fill="#454545"/></svg>
<svg style="position:absolute;left:60px;top:1093px;overflow:visible;" width="20" height="20" viewBox="0 0 20 20"><circle cx="9.7" cy="9.4" r="7.8" fill="none" stroke="#454545" stroke-width="2.4"/><path d="M10.5,5.2 V10.5 H6.9" fill="none" stroke="#454545" stroke-width="1.5"/></svg>
<svg style="position:absolute;left:59px;top:1192.6px;overflow:visible;" width="26" height="22" viewBox="0 0 26 22"><path d="M7,14.1 C4,13 2.4,11 2.4,8.8 C2.4,5.3 6.8,2.4 12.3,2.4 C17.7,2.4 22.1,5.3 22.1,8.8 C22.1,12.3 17.7,15.2 12.3,15.2 C11.5,15.2 10.7,15.1 10,15 C8.5,16.4 6.5,17.6 3.6,18.7 C5,17.2 6.4,15.7 7,14.1 Z" fill="none" stroke="#454545" stroke-width="1.5" stroke-linejoin="round"/></svg>
<div class="t" style="left:60.50px;top:1236.25px;font-size:22.5px;line-height:22.5px;color:#454545;font-weight:700;">?</div>
<svg style="position:absolute;left:0px;top:0px;overflow:visible;" width="1" height="1" viewBox="0 0 1 1"><g transform="translate(61.3,1301.3) rotate(-45)"><path d="M0,0 L5,-3.8 H16.5 V3.8 H5 Z" fill="#454545"/><rect x="17.5" y="-3.8" width="4.5" height="7.6" rx="1.6" fill="#454545"/><line x1="6" y1="-2.4" x2="15.5" y2="-2.4" stroke="#ffffff" stroke-width="0.7"/><line x1="4.6" y1="-3.04" x2="4.6" y2="3.04" stroke="#ffffff" stroke-width="1"/></g></svg>
<svg style="position:absolute;left:200px;top:1331px;overflow:visible;" width="44" height="24" viewBox="0 0 44 24"><rect x="6" y="2" width="31" height="4" fill="#fff"/><path d="M5.5,4.3 L21.5,20.3 L37.5,4.3" fill="#fff" stroke="#f4e24c" stroke-width="1.7"/><rect x="7.2" y="0" width="28.6" height="4.4" fill="#fff"/></svg>
</body></html>
